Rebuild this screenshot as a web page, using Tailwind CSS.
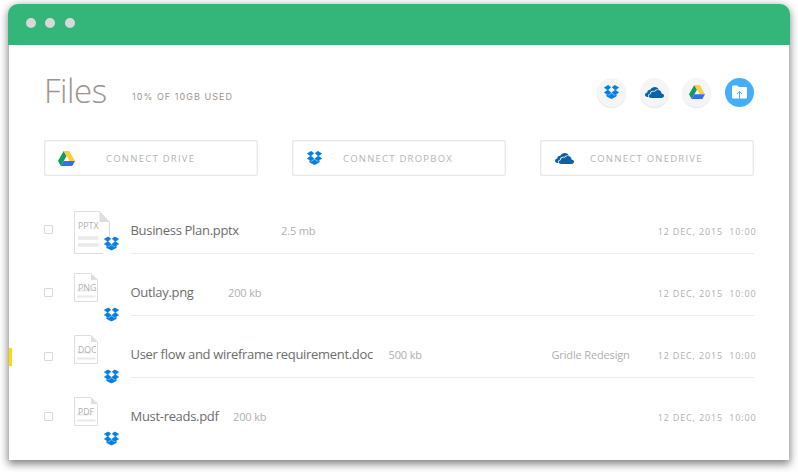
<!DOCTYPE html>
<html lang="en">
<head>
<meta charset="utf-8">
<title>Files</title>
<script src="https://cdn.jsdelivr.net/npm/@tailwindcss/browser@4"></script>
</head>
<body class="bg-white w-[798px] h-[472px] overflow-hidden font-['Open_Sans',sans-serif]">
<svg class="hidden">
  <symbol id="dropbox" viewBox="0 0 30 28"><path fill="#007ee5" stroke="#007ee5" stroke-width="1.300" stroke-linejoin="round" d="M8.500 .700 13.500 4.600 7.500 10 .700 5.200ZM21.500 .700 29.300 5.200 22.500 10 16.500 4.600ZM7.500 10 14.300 15.300 8.500 19.800 .700 15ZM22.500 10 29.300 15 21.500 19.800 15.700 15.300ZM15 16.800 20.500 21.600 24.500 19.500V22.300L15 27.400 5.500 22.300V19.500L9.500 21.600Z"/></symbol>
  <symbol id="drive" viewBox="0 0 32 28"><path fill="#0f9d58" d="M10.700 0 0 18.500 5.300 28 16 9.300Z"/><path fill="#ffcd40" d="M10.700 0H21.300L32 18.500H21.300Z"/><path fill="#2a74f0" d="M10.700 18.500H32L26.700 28H5.300Z"/></symbol>
  <symbol id="onedrive" viewBox="0 0 38 22"><path fill="#0a63a5" d="M7 20H5C2 20 0 18 0 15.500S2 11 4.500 10.800C4.500 7 7.500 5 10.500 5.500 12.500 1.500 16 0 19.500 0 23.500 0 26.500 2 27.700 5.500 24 4.500 21 5.500 19 8 14 6.500 10 9.500 10 13.500 6 14.500 5 17.500 7 20Z"/><path fill="#0a63a5" d="M13 22C9.500 22 7.500 20.500 7.500 18S9.500 14.500 11.500 14.500C11.300 10.500 15.500 8 19.500 9.700 21 7 23.500 6 26 6 30 6 33 9 33 13 36 13 38 15 38 17.500S36 22 33 22Z"/></symbol>
  <symbol id="sheet" viewBox="0 0 24 29"><path fill="#fff" stroke="#dedede" d="M.5.500H17L23.500 7V28.500H.5Z"/><path fill="#dedede" d="M17 .500V7H23.500Z"/><path stroke="#e9e9e9" stroke-width="2" d="M3 17.500H17M3 23.500H21.500"/></symbol>
</svg>

<main class="ml-[9px] mt-1 w-[780px] h-[456px] rounded-t-[10px] bg-white shadow-[0_3px_8px_1px_rgba(0,0,0,0.5)]">
  <header class="-mx-px h-[41px] rounded-t-[10px] bg-[#34b67a] flex items-start gap-[9.700px] pt-[13.500px] pl-[17.500px]">
    <i class="size-[10px] rounded-full bg-[#d8d8d8]"></i>
    <i class="size-[10px] rounded-full bg-[#d8d8d8]"></i>
    <i class="size-[10px] rounded-full bg-[#d8d8d8]"></i>
  </header>

  <section class="h-[95px] pl-[35px] pr-[35px] flex items-center">
    <h1 class="w-[88px] -mt-[4px] text-[33px] leading-[40px] font-light text-[#a0948e] tracking-[-0.500px]">Files</h1>
    <p class="mt-[9px] text-[9px] leading-3 tracking-[1.050px] text-[#a0948e] whitespace-nowrap font-['Inter',sans-serif]">10% OF 10GB USED</p>
    <div class="-mt-px ml-auto flex gap-[13.700px]">
      <span class="size-[29px] rounded-full bg-[#f5f5f5] shadow-[0_1px_1px_rgba(0,0,0,0.1)] flex items-center justify-center"><svg class="w-[15px] h-[14px]"><use href="#dropbox"/></svg></span>
      <span class="size-[29px] rounded-full bg-[#f5f5f5] shadow-[0_1px_1px_rgba(0,0,0,0.1)] flex items-center justify-center"><svg class="w-[19px] h-[11px]"><use href="#onedrive"/></svg></span>
      <span class="size-[29px] rounded-full bg-[#f5f5f5] shadow-[0_1px_1px_rgba(0,0,0,0.1)] flex items-center justify-center"><svg class="w-[16px] h-[14px]"><use href="#drive"/></svg></span>
      <span class="size-[29px] rounded-full bg-[#46adfa] flex items-center justify-center"><svg class="w-[15px] h-[14px]" viewBox="0 0 15 14"><path fill="#fff" d="M1 .500H5.500L7 2H14Q15 2 15 3V12.500Q15 13.500 14 13.500H1Q0 13.500 0 12.500V1.500Q0 .500 1 .500Z"/><path fill="none" stroke="#46adfa" stroke-width="1" d="M7.500 13.500V6.500M5 9 7.500 6.300 10 9"/></svg></span>
    </div>
  </section>

  <nav class="px-[35px] flex justify-between text-[9.500px] text-[#b5b5b5] whitespace-nowrap">
    <div class="w-[214px] h-[36px] rounded-[2px] border border-[#e8e8e8] shadow-[inset_0_0_0_0.500px_#eee] flex items-center pl-[13px]"><svg class="w-[17px] h-[15px]"><use href="#drive"/></svg><span class="ml-[31px] pt-[2px] tracking-[1.250px]">CONNECT DRIVE</span></div>
    <div class="w-[214px] h-[36px] rounded-[2px] border border-[#e8e8e8] shadow-[inset_0_0_0_0.500px_#eee] flex items-center pl-[14px]"><svg class="w-[15px] h-[14px]"><use href="#dropbox"/></svg><span class="ml-[21px] pt-[2px] tracking-[1.230px]">CONNECT DROPBOX</span></div>
    <div class="w-[214px] h-[36px] rounded-[2px] border border-[#e8e8e8] shadow-[inset_0_0_0_0.500px_#eee] flex items-center pl-[14px]"><svg class="w-[19px] h-[11px]"><use href="#onedrive"/></svg><span class="ml-[16px] pt-[2px] tracking-[1.250px]">CONNECT ONEDRIVE</span></div>
  </nav>

  <ul class="pt-[16px] text-[#b0b0b0] text-[11px] tracking-[-0.150px] whitespace-nowrap">
    <li class="h-[62px] flex pl-[35px]">
      <i class="mt-[33px] size-[9px] rounded-[1px] border border-[#dadada]"></i>
      <svg class="ml-[21px] w-[57px] h-[62px] overflow-visible tracking-normal" viewBox="0 0 57 62"><path fill="#fff" stroke="#dedede" d="M29 61.500H.5V19.500H25.500L35.500 30V44"/><path fill="#dedede" d="M25.500 19.500V30H35.500Z"/><path stroke="#e9e9e9" stroke-width="3.500" d="M4 46H24.500M4 53H24.500"/><text x="4" y="37" font-size="9.500" fill="#b0b0b0" textLength="20.500" lengthAdjust="spacingAndGlyphs">PPTX</text><use href="#dropbox" x="30" y="44.500" width="15" height="14"/></svg>
      <div class="w-[623px] border-b border-[#ececec] flex items-center pt-[17px]"><b class="-ml-[0.500px] w-[150.500px] font-normal text-[13px] tracking-[-0.310px] text-[#6d6d6d]">Business Plan.pptx</b><span>2.5 mb</span><time class="ml-auto -mr-[2.500px] pt-px text-[9px] tracking-[0.850px] whitespace-pre">12 DEC, 2015  10:00</time></div>
    </li>
    <li class="h-[62px] flex pl-[35px]">
      <i class="mt-[34px] size-[9px] rounded-[1px] border border-[#dadada]"></i>
      <svg class="ml-[21px] w-[57px] h-[62px] overflow-visible tracking-normal" viewBox="0 0 57 62"><use href="#sheet" y="19" width="24" height="29"/><text x="4" y="37" font-size="9.500" fill="#b0b0b0" textLength="18.500" lengthAdjust="spacingAndGlyphs">PNG</text><use href="#dropbox" x="30" y="53.500" width="15" height="14"/></svg>
      <div class="w-[623px] border-b border-[#ececec] flex items-center pt-[17px]"><b class="-ml-[0.500px] w-[97.500px] font-normal text-[13px] tracking-[-0.310px] text-[#6d6d6d]">Outlay.png</b><span>200 kb</span><time class="ml-auto -mr-[2.500px] pt-px text-[9px] tracking-[0.850px] whitespace-pre">12 DEC, 2015  10:00</time></div>
    </li>
    <li class="h-[62px] flex">
      <i class="mt-[32px] mr-[32px] w-[3px] h-[18px] bg-[#ffdc00]"></i>
      <i class="mt-[36px] size-[9px] rounded-[1px] border border-[#dadada]"></i>
      <svg class="ml-[21px] w-[57px] h-[62px] overflow-visible tracking-normal" viewBox="0 0 57 62"><use href="#sheet" y="19" width="24" height="29"/><text x="4" y="37" font-size="9.500" fill="#b0b0b0" textLength="18.500" lengthAdjust="spacingAndGlyphs">DOC</text><use href="#dropbox" x="30" y="53.500" width="15" height="14"/></svg>
      <div class="w-[623px] border-b border-[#ececec] flex items-center pt-[17px]"><b class="-ml-[0.500px] w-[258px] font-normal text-[13px] tracking-[-0.310px] text-[#6d6d6d]">User flow and wireframe requirement.doc</b><span class="w-[163px]">500 kb</span><span>Gridle Redesign</span><time class="ml-auto -mr-[2.500px] pt-px text-[9px] tracking-[0.850px] whitespace-pre">12 DEC, 2015  10:00</time></div>
    </li>
    <li class="h-[62px] flex pl-[35px]">
      <i class="mt-[34px] size-[9px] rounded-[1px] border border-[#dadada]"></i>
      <svg class="ml-[21px] w-[57px] h-[62px] overflow-visible tracking-normal" viewBox="0 0 57 62"><use href="#sheet" y="19" width="24" height="29"/><text x="4" y="37" font-size="9.500" fill="#b0b0b0" textLength="16" lengthAdjust="spacingAndGlyphs">PDF</text><use href="#dropbox" x="30" y="53.500" width="15" height="14"/></svg>
      <div class="w-[623px] border-b border-transparent flex items-center pt-[17px]"><b class="-ml-[0.500px] w-[102.500px] font-normal text-[13px] tracking-[-0.310px] text-[#6d6d6d]">Must-reads.pdf</b><span>200 kb</span><time class="ml-auto -mr-[2.500px] pt-px text-[9px] tracking-[0.850px] whitespace-pre">12 DEC, 2015  10:00</time></div>
    </li>
  </ul>
</main>
</body>
</html>
